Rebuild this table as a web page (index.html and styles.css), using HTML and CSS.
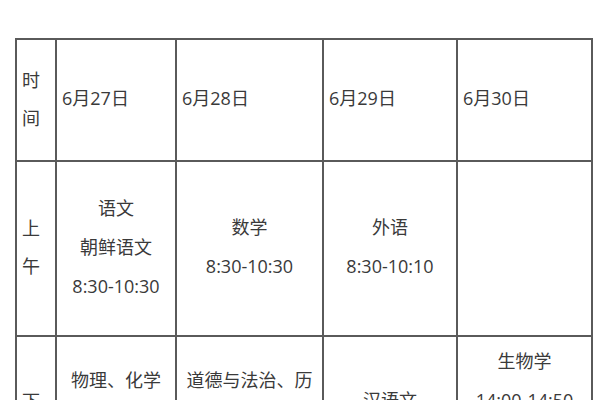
FILE: index.html
```html
<!DOCTYPE html>
<html lang="zh-CN">
<head>
<meta charset="utf-8">
<title>考试时间安排</title>
<link rel="stylesheet" href="styles.css">
</head>
<body>
<div class="page">
  <div class="schedule">
    <div class="cell head label">时间</div>
    <div class="cell head date">6月27日</div>
    <div class="cell head date">6月28日</div>
    <div class="cell head date">6月29日</div>
    <div class="cell head date">6月30日</div>

    <div class="cell label">上午</div>
    <div class="cell subj"><p>语文</p><p>朝鲜语文</p><p>8:30-10:30</p></div>
    <div class="cell subj"><p>数学</p><p>8:30-10:30</p></div>
    <div class="cell subj"><p>外语</p><p>8:30-10:10</p></div>
    <div class="cell subj"></div>

    <div class="cell label">下午</div>
    <div class="cell subj"><p>物理、化学</p><p>（合卷）</p><p>14:00-16:00</p></div>
    <div class="cell subj"><p>道德与法治、历史（合卷，开卷）</p><p>14:00-16:00</p></div>
    <div class="cell subj"><p>汉语文</p><p>14:00-15:30</p></div>
    <div class="cell subj"><p>生物学</p><p>14:00-14:50</p><p>地理</p><p>15:20-16:10</p></div>
  </div>
</div>
</body>
</html>
```

FILE: styles.css
```css
html, body {
  margin: 0;
  padding: 0;
  background: #ffffff;
  overflow: hidden;
}

.page {
  padding: 38px 0 0 15px;
  font-family: "Open Sans", "Noto Sans CJK SC", sans-serif;
  font-size: 18px;
  line-height: 39px;
  color: #3a3a3a;
}

.schedule {
  display: grid;
  grid-template-columns: 40px 120px 147px 134px 135px;
  grid-template-rows: 122px 175px 170px;
  width: 578px;
  box-sizing: border-box;
  border-left: 2px solid #5a5a5a;
  border-top: 2px solid #5a5a5a;
}

.cell {
  box-sizing: border-box;
  border-right: 2px solid #5a5a5a;
  border-bottom: 2px solid #5a5a5a;
  display: flex;
  flex-direction: column;
  justify-content: center;
  padding: 0 5px 3px;
  min-width: 0;
}

.label {
  line-height: 38px;
}

.subj {
  align-items: center;
  text-align: center;
}

.subj p {
  margin: 0;
}
```
